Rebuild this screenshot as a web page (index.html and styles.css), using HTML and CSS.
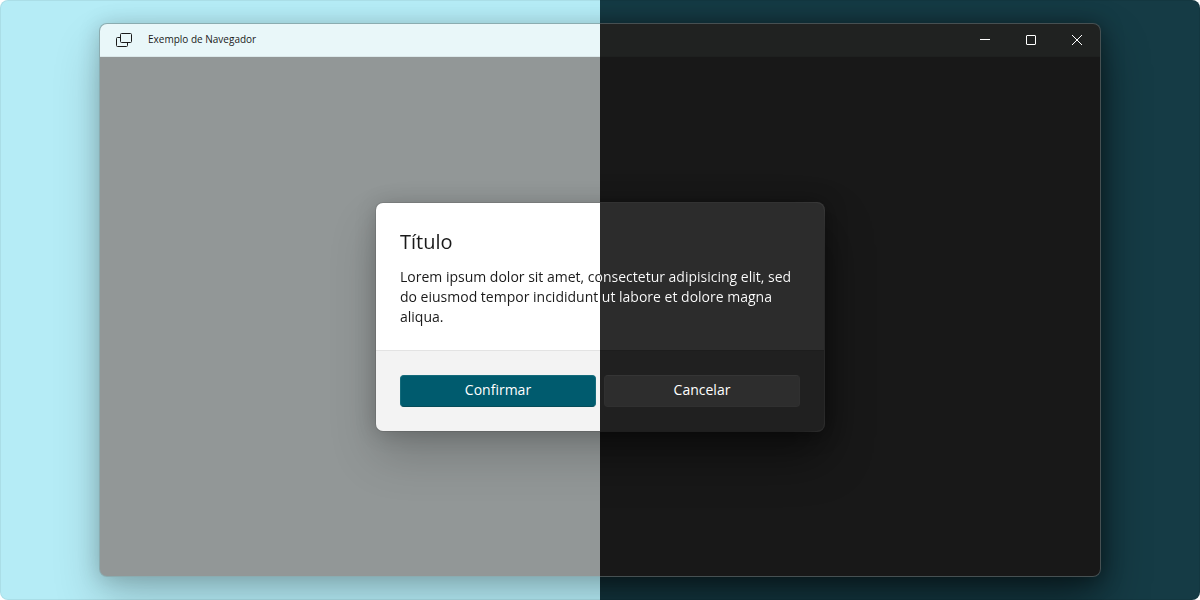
FILE: index.html
```html
<!DOCTYPE html>
<html lang="pt">
<head>
<meta charset="utf-8">
<title>Exemplo de Navegador</title>
<link rel="stylesheet" href="styles.css">
</head>
<body>
<main class="stage">
  <section class="window elevated">
    <header class="titlebar">
      <svg class="app-icon" width="16" height="16" viewBox="0 0 16 16" fill="none" stroke="currentColor" aria-hidden="true">
        <rect x="4.5" y="1.5" width="11" height="9" rx="1"/>
        <path d="M4.5 5.500H1.500a1 1 0 0 0-1 1V13.500a1 1 0 0 0 1 1H10.500a1 1 0 0 0 1-1V10.500"/>
      </svg>
      <h1 class="caption">Exemplo de Navegador</h1>
      <div class="controls">
        <button class="control" type="button" aria-label="Minimizar">
          <svg width="10" height="10" viewBox="0 0 10 10" fill="none" stroke="currentColor"><path d="M0 4.500H10"/></svg>
        </button>
        <button class="control" type="button" aria-label="Maximizar">
          <svg width="10" height="10" viewBox="0 0 10 10" fill="none" stroke="currentColor"><rect x=".5" y=".5" width="9" height="9" rx=".5"/></svg>
        </button>
        <button class="control" type="button" aria-label="Fechar">
          <svg width="10" height="10" viewBox="0 0 10 10" fill="none" stroke="currentColor"><path d="M0 0L10 10M10 0L0 10"/></svg>
        </button>
      </div>
    </header>
    <div class="client">
      <dialog class="dialog elevated" open aria-labelledby="dialog-title">
        <div class="dialog-body">
          <h2 class="dialog-title split-text" id="dialog-title">Título</h2>
          <p class="dialog-text split-text">Lorem ipsum dolor sit amet, consectetur adipisicing elit, sed do eiusmod tempor incididunt ut labore et dolore magna aliqua.</p>
        </div>
        <div class="dialog-actions">
          <button class="button primary" type="button">Confirmar</button>
          <button class="button secondary" type="button">Cancelar</button>
        </div>
      </dialog>
    </div>
  </section>
</main>
</body>
</html>
```

FILE: styles.css
```css
* {
  box-sizing: border-box;
}

body {
  margin: 0;
  background: #fff;
  font-family: "Open Sans", "Noto Sans", sans-serif;
}

h1, h2, p {
  margin: 0;
  font-weight: 400;
}

.stage {
  display: flex;
  min-height: 100vh;
  padding: 23px 99px;
  overflow: hidden;
  border-radius: 8px;
  background: linear-gradient(90deg, #b5ecf6 50%, #153b45 50%);
  box-shadow: inset 0 0 0 1px rgba(0, 0, 0, 0.06);
}

/* Each half of an elevated surface casts its own theme's shadow. */
.elevated {
  position: relative;
  z-index: 0;
}

.elevated::before,
.elevated::after {
  content: "";
  position: absolute;
  inset: 0;
  z-index: -2;
  border-radius: 8px;
}

.elevated::before {
  box-shadow: 0 24px 48px rgba(0, 0, 0, 0.19), 0 2px 21px rgba(0, 0, 0, 0.19);
  clip-path: inset(-100px 50% -140px -100px);
}

.elevated::after {
  box-shadow: 0 24px 48px rgba(0, 0, 0, 0.45), 0 2px 21px rgba(0, 0, 0, 0.45);
  clip-path: inset(-100px -100px -140px 50%);
}

.window {
  flex: 1;
  display: flex;
  flex-direction: column;
  padding: 1px;
  border-radius: 8px;
  background: linear-gradient(90deg, #8bacb0 50%, #465052 50%);
}

.titlebar {
  display: flex;
  align-items: center;
  height: 33px;
  padding-left: 16px;
  border-radius: 7px 7px 0 0;
  border-bottom: 1px solid rgba(0, 0, 0, 0.06);
  background: linear-gradient(90deg, #e9f7f9 50%, #202221 50%);
  color: #1a1a1a;
}

.caption {
  margin-left: 16px;
  padding-bottom: 2px;
  font-size: 10px;
  line-height: 16px;
}

.controls {
  display: flex;
  align-self: stretch;
  margin-left: auto;
}

.control {
  display: grid;
  place-items: center;
  width: 46px;
  padding: 0;
  border: 0;
  background: none;
  color: #fff;
}

.client {
  flex: 1;
  display: grid;
  place-items: center;
  padding-top: 1px;
  border-radius: 0 0 7px 7px;
  background: linear-gradient(90deg, #929797 50%, #181818 50%);
}

.dialog {
  width: 450px;
  max-width: 100%;
  margin: 0;
  padding: 0;
  border: 1px solid transparent;
  border-radius: 8px;
  background: linear-gradient(90deg, #858989 50%, #434343 50%) border-box;
}

.dialog-body {
  padding: 24px 24px 23px;
  border-bottom: 1px solid;
  border-image: linear-gradient(90deg, #e3e3e3 50%, #1d1d1d 50%) 1;
  border-radius: 7px 7px 0 0;
  background: linear-gradient(90deg, #fff 50%, #2c2c2c 50%);
}

.split-text {
  background: linear-gradient(90deg, #1a1a1a 50%, #fff 50%);
  background-clip: text;
  color: transparent;
}

.dialog-title {
  font-size: 20px;
  line-height: 30px;
}

.dialog-text {
  margin-top: 10px;
  font-size: 14px;
  line-height: 20px;
}

.dialog-actions {
  display: grid;
  grid-template-columns: 1fr 1fr;
  gap: 8px;
  padding: 24px;
  border-radius: 0 0 7px 7px;
  background: linear-gradient(90deg, #f3f3f3 50%, #202020 50%);
}

.button {
  height: 32px;
  padding: 0 12px 2px;
  border: 1px solid;
  border-radius: 4px;
  font: 14px/20px "Open Sans", "Noto Sans", sans-serif;
  color: #fff;
}

.primary {
  border-color: #146b7b #146b7b #054c59;
  background: #005b6e;
}

.secondary {
  border-color: #353535 #303030 #303030;
  background: #2d2d2d;
}
```
